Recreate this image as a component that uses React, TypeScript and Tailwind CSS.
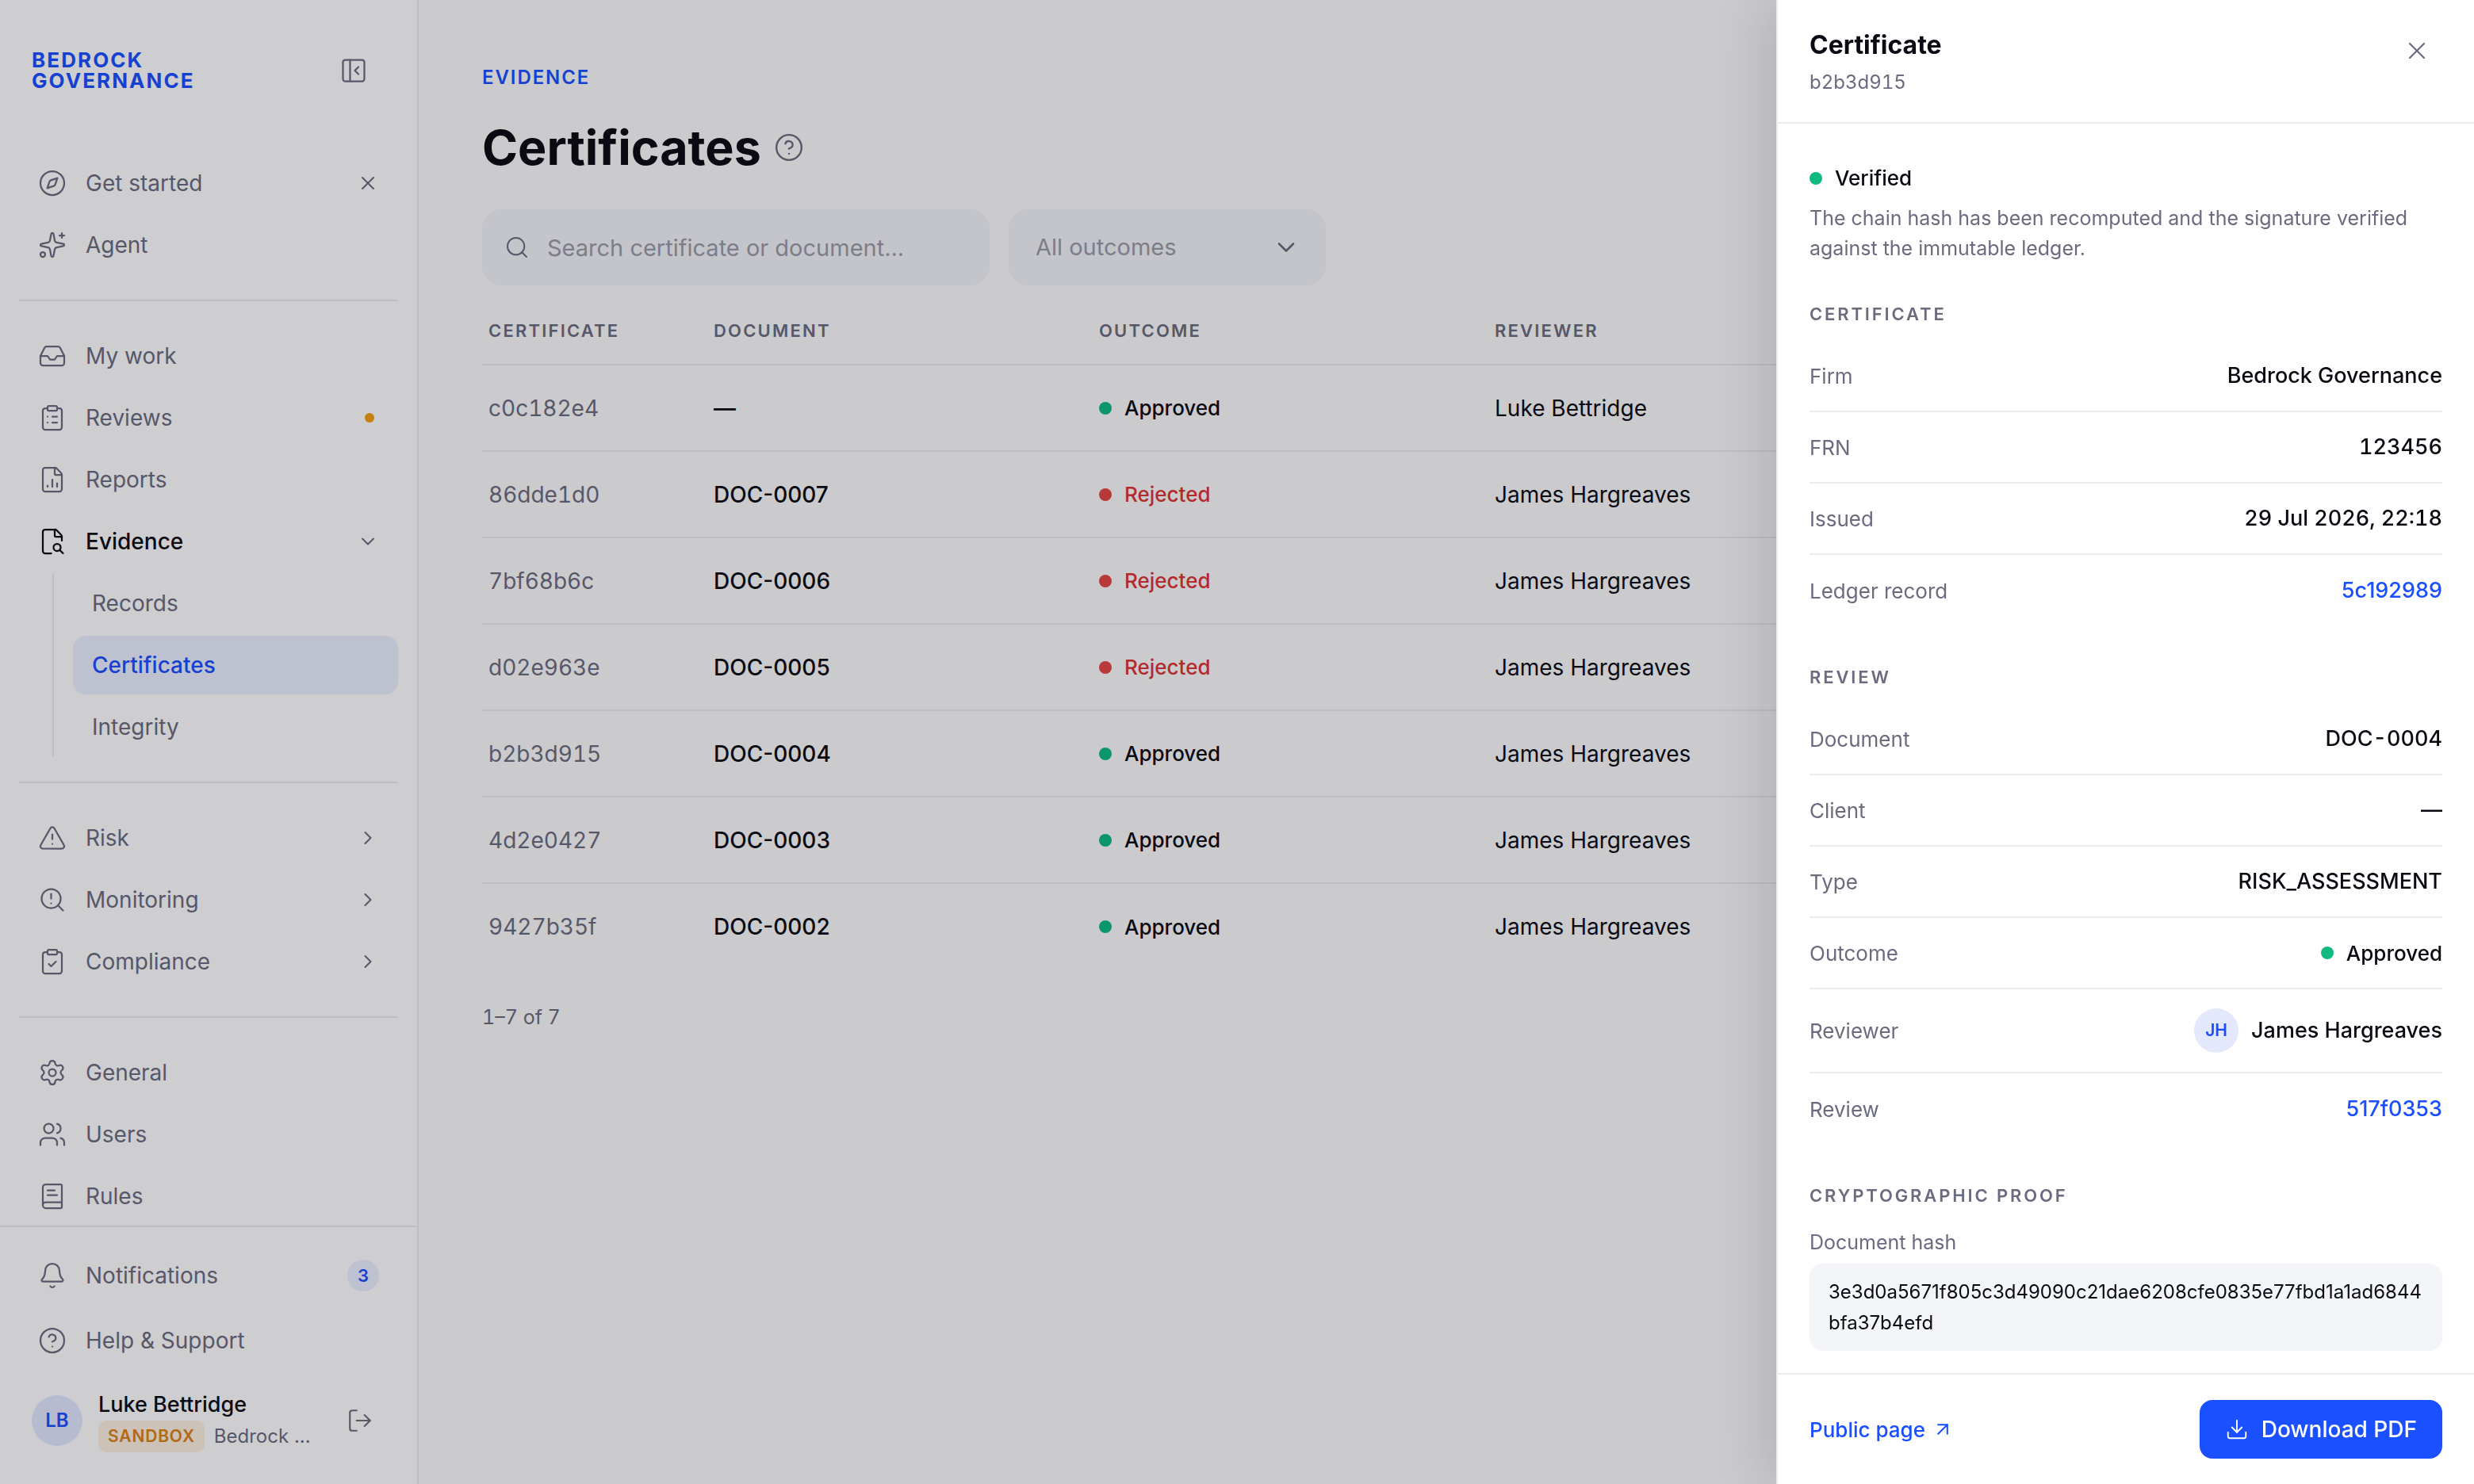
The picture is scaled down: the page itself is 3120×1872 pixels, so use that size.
import type { ReactNode } from "react";
import {
  ArrowUpRight,
  Bell,
  BookText,
  ChevronDown,
  ChevronRight,
  CircleHelp,
  ClipboardCheck,
  ClipboardList,
  Compass,
  Download,
  FileChartColumn,
  Inbox,
  LogOut,
  PanelLeftClose,
  Search,
  Settings,
  Sparkles,
  TriangleAlert,
  Users,
  X,
} from "lucide-react";

const iconProps = { size: 36, strokeWidth: 1.5, className: "shrink-0", "aria-hidden": true } as const;

function FileSearchIcon() {
  return (
    <svg viewBox="0 0 24 24" fill="none" stroke="currentColor" strokeWidth={1.5} strokeLinecap="round" strokeLinejoin="round" className="size-9 shrink-0" aria-hidden="true">
      <path d="M11.1 22H6a2 2 0 0 1-2-2V4a2 2 0 0 1 2-2h8a2.4 2.4 0 0 1 1.706.706l3.589 3.588A2.4 2.4 0 0 1 20 8v3.25" />
      <path d="M14 2v5a1 1 0 0 0 1 1h5" />
      <path d="m21 22-2.88-2.88" />
      <circle cx="16" cy="17" r="3" />
    </svg>
  );
}

function SearchAlertIcon() {
  return (
    <svg viewBox="0 0 24 24" fill="none" stroke="currentColor" strokeWidth={1.5} strokeLinecap="round" strokeLinejoin="round" className="size-9 shrink-0" aria-hidden="true">
      <circle cx="11" cy="11" r="8" />
      <path d="m21 21-4.3-4.3" />
      <path d="M11 7v4" />
      <path d="M11 15h.01" />
    </svg>
  );
}

function NavRow({ icon, label, trailing, active }: { icon: ReactNode; label: string; trailing?: ReactNode; active?: boolean }) {
  return (
    <div className={`flex h-[74px] items-center rounded-2xl px-6 text-[28px] ${active ? "font-medium text-[#0a0a12]" : "text-[#6b6b80]"}`}>
      <a href="#" className="flex flex-1 items-center gap-6">
        {icon}
        {label}
      </a>
      {trailing}
    </div>
  );
}

function Expand({ label, open }: { label: string; open?: boolean }) {
  return (
    <button aria-label={`Toggle ${label}`} className="text-[#6b6b80]">
      {open ? <ChevronDown size={28} strokeWidth={1.75} /> : <ChevronRight size={28} strokeWidth={1.75} />}
    </button>
  );
}

function SubLink({ label, active }: { label: string; active?: boolean }) {
  return (
    <a
      href="#"
      className={`flex h-[74px] items-center rounded-2xl px-6 text-[28px] ${active ? "bg-[#ecf0ff] font-medium text-[#1a4fff]" : "text-[#6b6b80]"}`}
    >
      {label}
    </a>
  );
}

function Divider() {
  return <hr className="my-7 border-t-2 border-[#ebebec]" />;
}

function Sidebar() {
  return (
    <aside className="flex h-full w-[528px] shrink-0 flex-col border-r-2 border-[#ebebec] bg-white">
      <header className="flex h-[178px] shrink-0 items-center justify-between pr-12 pl-10">
        <p className="text-[26px] leading-[26px] font-bold tracking-[0.08em] text-[#1a4fff]">
          BEDROCK
          <br />
          GOVERNANCE
        </p>
        <button aria-label="Collapse sidebar" className="flex size-16 items-center justify-center text-[#6b6b80]">
          <PanelLeftClose {...iconProps} />
        </button>
      </header>

      <nav className="flex min-h-0 flex-1 flex-col gap-1 overflow-hidden px-6 pt-4">
        <NavRow
          icon={<Compass {...iconProps} />}
          label="Get started"
          trailing={
            <button aria-label="Dismiss get started" className="text-[#6b6b80]">
              <X size={28} strokeWidth={1.75} />
            </button>
          }
        />
        <NavRow icon={<Sparkles {...iconProps} />} label="Agent" />
        <Divider />
        <NavRow icon={<Inbox {...iconProps} />} label="My work" />
        <NavRow icon={<ClipboardList {...iconProps} />} label="Reviews" trailing={<span className="mr-1.5 size-3 rounded-full bg-[#f59e0b]" />} />
        <NavRow icon={<FileChartColumn {...iconProps} />} label="Reports" />
        <NavRow icon={<FileSearchIcon />} label="Evidence" active trailing={<Expand label="Evidence" open />} />
        <div className="ml-[42px] flex flex-col gap-1 border-l-2 border-[#ebebec] pl-6">
          <SubLink label="Records" />
          <SubLink label="Certificates" active />
          <SubLink label="Integrity" />
        </div>
        <Divider />
        <NavRow icon={<TriangleAlert {...iconProps} />} label="Risk" trailing={<Expand label="Risk" />} />
        <NavRow icon={<SearchAlertIcon />} label="Monitoring" trailing={<Expand label="Monitoring" />} />
        <NavRow icon={<ClipboardCheck {...iconProps} />} label="Compliance" trailing={<Expand label="Compliance" />} />
        <Divider />
        <NavRow icon={<Settings {...iconProps} />} label="General" />
        <NavRow icon={<Users {...iconProps} />} label="Users" />
        <NavRow icon={<BookText {...iconProps} />} label="Rules" />
      </nav>

      <footer className="shrink-0 border-t-2 border-[#ebebec] pt-6 pb-10">
        <div className="flex flex-col gap-2 px-6">
          <NavRow
            icon={<Bell {...iconProps} />}
            label="Notifications"
            trailing={<span className="flex size-10 items-center justify-center rounded-full bg-[#ecf0ff] text-[22px] font-semibold text-[#1a4fff]">3</span>}
          />
          <NavRow icon={<CircleHelp {...iconProps} />} label="Help & Support" />
        </div>
        <div className="mt-6 flex items-center gap-5 pr-12 pl-10">
          <span className="flex size-16 shrink-0 items-center justify-center rounded-full bg-[#e1e8ff] text-[24px] font-semibold text-[#1a4fff]">LB</span>
          <div className="flex-1">
            <p className="text-[27px] leading-10 font-medium text-[#0a0a12]">Luke Bettridge</p>
            <p className="flex items-center gap-3">
              <span className="h-10 rounded-[10px] bg-[#fdf1e1] px-3 text-[21px] leading-10 font-semibold tracking-[0.04em] text-[#dc8014]">SANDBOX</span>
              <span className="text-[24px] leading-10 text-[#6b6b80]">Bedrock ...</span>
            </p>
          </div>
          <button aria-label="Sign out" className="flex size-12 items-center justify-center text-[#6b6b80]">
            <LogOut size={34} strokeWidth={1.5} />
          </button>
        </div>
      </footer>
    </aside>
  );
}

type Outcome = "Approved" | "Rejected";

function Status({ outcome }: { outcome: Outcome }) {
  const ok = outcome === "Approved";
  return (
    <span className={`flex items-center gap-4 text-[26px] font-medium ${ok ? "text-[#0a0a12]" : "text-[#dc3333]"}`}>
      <span className={`size-4 rounded-full ${ok ? "bg-[#10b981]" : "bg-[#e54545]"}`} />
      {outcome}
    </span>
  );
}

const certificates: { id: string; doc: string; outcome: Outcome; reviewer: string }[] = [
  { id: "c0c182e4", doc: "—", outcome: "Approved", reviewer: "Luke Bettridge" },
  { id: "86dde1d0", doc: "DOC-0007", outcome: "Rejected", reviewer: "James Hargreaves" },
  { id: "7bf68b6c", doc: "DOC-0006", outcome: "Rejected", reviewer: "James Hargreaves" },
  { id: "d02e963e", doc: "DOC-0005", outcome: "Rejected", reviewer: "James Hargreaves" },
  { id: "b2b3d915", doc: "DOC-0004", outcome: "Approved", reviewer: "James Hargreaves" },
  { id: "4d2e0427", doc: "DOC-0003", outcome: "Approved", reviewer: "James Hargreaves" },
  { id: "9427b35f", doc: "DOC-0002", outcome: "Approved", reviewer: "James Hargreaves" },
];

function Main() {
  return (
    <main className="min-w-0 flex-1 overflow-hidden bg-[#fcfcfc] px-20 pt-20">
      <p className="text-[24px] leading-9 font-semibold tracking-[0.08em] text-[#1a4fff]">EVIDENCE</p>
      <div className="mt-8 flex items-center gap-4">
        <h1 className="text-[61px] leading-[76px] font-bold text-[#0a0a12]">Certificates</h1>
        <button aria-label="About certificates" className="text-[#6b6b80]">
          <CircleHelp size={38} strokeWidth={1.5} />
        </button>
      </div>

      <div className="mt-10 flex gap-6">
        <div className="flex h-24 w-[640px] items-center gap-[22px] rounded-3xl bg-[#f3f4f8] px-7 text-[#6b6b80]">
          <Search size={32} strokeWidth={1.5} className="shrink-0" aria-hidden />
          <input
            type="text"
            aria-label="Search certificates"
            placeholder="Search certificate or document..."
            className="h-full min-w-0 flex-1 bg-transparent text-[29px] text-[#0a0a12] outline-none placeholder:text-[#9a9aa8]"
          />
        </div>
        <div className="relative w-[400px]">
          <select aria-label="Outcome" className="h-24 w-full appearance-none rounded-3xl bg-[#f3f4f8] px-[34px] text-[29px] text-[#9a9aa8] outline-none">
            <option>All outcomes</option>
            <option>Approved</option>
            <option>Rejected</option>
          </select>
          <ChevronDown size={36} strokeWidth={1.75} className="pointer-events-none absolute inset-y-0 right-8 my-auto text-[#6b6b80]" aria-hidden />
        </div>
      </div>

      <table className="mt-4 w-full table-fixed text-left">
        <colgroup>
          <col className="w-[284px]" />
          <col className="w-[486px]" />
          <col className="w-[499px]" />
          <col />
        </colgroup>
        <thead>
          <tr className="h-[84px] border-b-2 border-[#ebebec] text-[22px] tracking-[0.1em] text-[#6b6b80]">
            <th className="px-2 font-semibold">CERTIFICATE</th>
            <th className="px-2 font-semibold">DOCUMENT</th>
            <th className="px-2 font-semibold">OUTCOME</th>
            <th className="px-2 font-semibold">REVIEWER</th>
          </tr>
        </thead>
        <tbody>
          {certificates.map((c) => (
            <tr key={c.id} className="h-[109px] border-b-2 border-[#ebebec] text-[28px] text-[#0a0a12] last:border-b-0">
              <td className="px-2 text-[#6b6b80] tabular-nums">{c.id}</td>
              <td className="px-2 font-medium">{c.doc}</td>
              <td className="px-2">
                <Status outcome={c.outcome} />
              </td>
              <td className="px-2">{c.reviewer}</td>
            </tr>
          ))}
        </tbody>
      </table>
      <p className="mt-10 text-[25px] leading-10 text-[#6b6b80] tabular-nums">1–7 of 7</p>
    </main>
  );
}

function Section({ title, children }: { title: string; children: ReactNode }) {
  return (
    <section className="mt-12">
      <h3 className="text-[22px] leading-8 font-semibold tracking-[0.13em] text-[#6b6b80]">{title}</h3>
      {children}
    </section>
  );
}

function Field({ label, children }: { label: string; children: ReactNode }) {
  return (
    <div className="flex min-h-[90px] items-center justify-between border-b-2 border-[#ebebec] last:border-b-0">
      <dt className="text-[26px] text-[#6b6b80]">{label}</dt>
      <dd className="text-[27px] font-medium text-[#0a0a12]">{children}</dd>
    </div>
  );
}

function CertificatePanel() {
  return (
    <div
      role="dialog"
      aria-label="Certificate"
      className="fixed inset-y-0 right-0 flex w-[880px] flex-col border-l-2 border-[#ebebec] bg-white shadow-[-16px_0_64px_rgba(10,10,20,0.12)]"
    >
      <header className="flex items-start justify-between border-b-2 border-[#ebebec] px-10 py-8">
        <div>
          <h2 className="text-[32px] leading-[50px] font-bold text-[#0a0a12]">Certificate</h2>
          <p className="mt-1 text-[24px] leading-9 text-[#6b6b80] tabular-nums">b2b3d915</p>
        </div>
        <button aria-label="Close" className="flex size-16 items-center justify-center text-[#6b6b80]">
          <X size={36} strokeWidth={1.5} />
        </button>
      </header>

      <div className="min-h-0 flex-1 overflow-hidden px-10 pt-[50px]">
        <p className="flex items-center gap-4 text-[26px] leading-[38px] font-medium text-[#0a0a12]">
          <span className="size-4 rounded-full bg-[#10b981]" />
          Verified
        </p>
        <p className="mt-3 text-[25px] leading-[38px] text-[#6b6b80]">The chain hash has been recomputed and the signature verified against the immutable ledger.</p>

        <Section title="CERTIFICATE">
          <dl className="mt-[18px]">
            <Field label="Firm">Bedrock Governance</Field>
            <Field label="FRN">
              <span className="tabular-nums">123456</span>
            </Field>
            <Field label="Issued">
              <span className="tabular-nums">29 Jul 2026, 22:18</span>
            </Field>
            <Field label="Ledger record">
              <a href="#" className="text-[#1a4fff]">5c192989</a>
            </Field>
          </dl>
        </Section>

        <Section title="REVIEW">
          <dl className="mt-[18px]">
            <Field label="Document">
              <span className="tabular-nums">DOC-0004</span>
            </Field>
            <Field label="Client">—</Field>
            <Field label="Type">RISK_ASSESSMENT</Field>
            <Field label="Outcome">
              <Status outcome="Approved" />
            </Field>
            <Field label="Reviewer">
              <span className="flex items-center gap-4 py-6">
                <span className="flex size-14 items-center justify-center rounded-full bg-[#e3e8fd] text-[21px] font-semibold text-[#1a4fff]">JH</span>
                James Hargreaves
              </span>
            </Field>
            <Field label="Review">
              <a href="#" className="text-[#1a4fff]">517f0353</a>
            </Field>
          </dl>
        </Section>

        <Section title="CRYPTOGRAPHIC PROOF">
          <p className="mt-6 text-[25px] leading-[38px] text-[#6b6b80]">Document hash</p>
          <p className="mt-2 rounded-2xl bg-[#f4f5f9] px-6 py-4 text-[24px] leading-[39px] break-all text-[#0a0a12]">
            3e3d0a5671f805c3d49090c21dae6208cfe0835e77fbd1a1ad6844bfa37b4efd
          </p>
        </Section>
      </div>

      <footer className="flex items-center justify-between border-t-2 border-[#ebebec] px-10 py-8">
        <a href="#" className="flex items-center gap-2 text-[26px] font-medium text-[#1a4fff]">
          Public page
          <ArrowUpRight size={28} strokeWidth={1.75} aria-hidden />
        </a>
        <button className="flex h-[74px] items-center gap-4 rounded-2xl bg-[#1a50ff] px-8 text-[28px] font-medium text-white">
          <Download size={30} strokeWidth={1.5} aria-hidden />
          Download PDF
        </button>
      </footer>
    </div>
  );
}

export default function App() {
  return (
    <div className="flex h-screen overflow-hidden font-['Inter',sans-serif]">
      <Sidebar />
      <Main />
      <div className="fixed inset-0 bg-[#0a0a14]/20" />
      <CertificatePanel />
    </div>
  );
}
